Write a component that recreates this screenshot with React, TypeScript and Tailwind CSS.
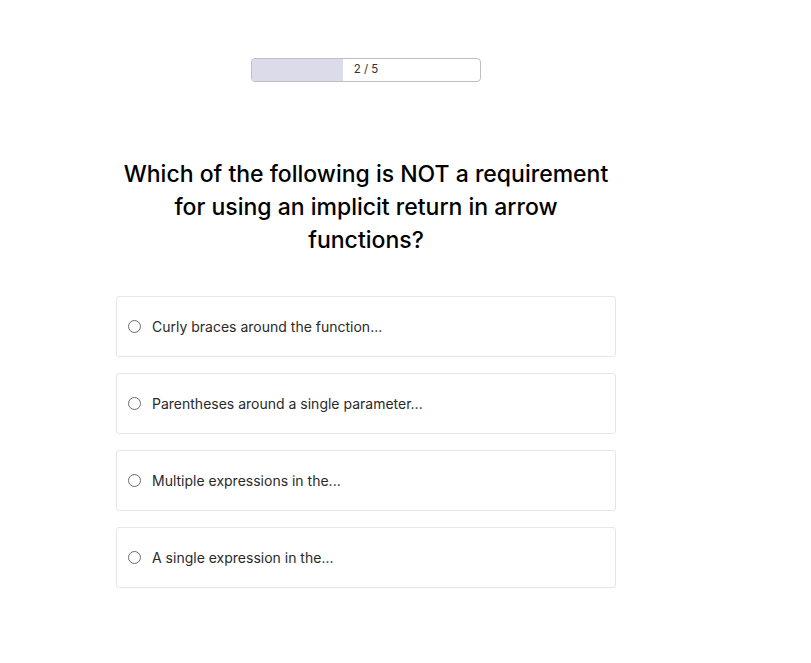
const OPTIONS = [
  "Curly braces around the function...",
  "Parentheses around a single parameter...",
  "Multiple expressions in the...",
  "A single expression in the...",
];

export default function App() {
  const current = 2;
  const total = 5;

  return (
    <div className="min-h-screen bg-white font-['Inter',sans-serif] text-black">
      <div className="ml-[116px] w-[500px] pt-[58px]">
        {/* Progress */}
        <div className="flex justify-center">
          <div className="relative h-[24px] w-[230px] overflow-hidden rounded-[4px] border border-[#bdbdc4]">
            <div
              className="h-full bg-[#dcdbe9]"
              style={{ width: `${(current / total) * 100}%` }}
            />
            <span className="absolute inset-0 flex items-center justify-center text-[11.5px] text-[#333]">
              {current} / {total}
            </span>
          </div>
        </div>

        {/* Question */}
        <h1 className="mx-auto mt-[76px] w-[490px] text-center text-[23px] font-medium leading-[33px]">
          Which of the following is NOT a requirement for using an implicit
          return in arrow functions?
        </h1>

        {/* Options */}
        <div className="mt-[39px] flex flex-col gap-4">
          {OPTIONS.map((opt) => (
            <label
              key={opt}
              className="flex h-[61px] items-center gap-[11px] rounded-[3px] border border-[#e6e6e6] px-[11px]"
            >
              <span className="h-[13px] w-[13px] rounded-full border border-[#6b6b6b]" />
              <span className="text-[14px] text-[#2a2a2a]">{opt}</span>
            </label>
          ))}
        </div>
      </div>
    </div>
  );
}
